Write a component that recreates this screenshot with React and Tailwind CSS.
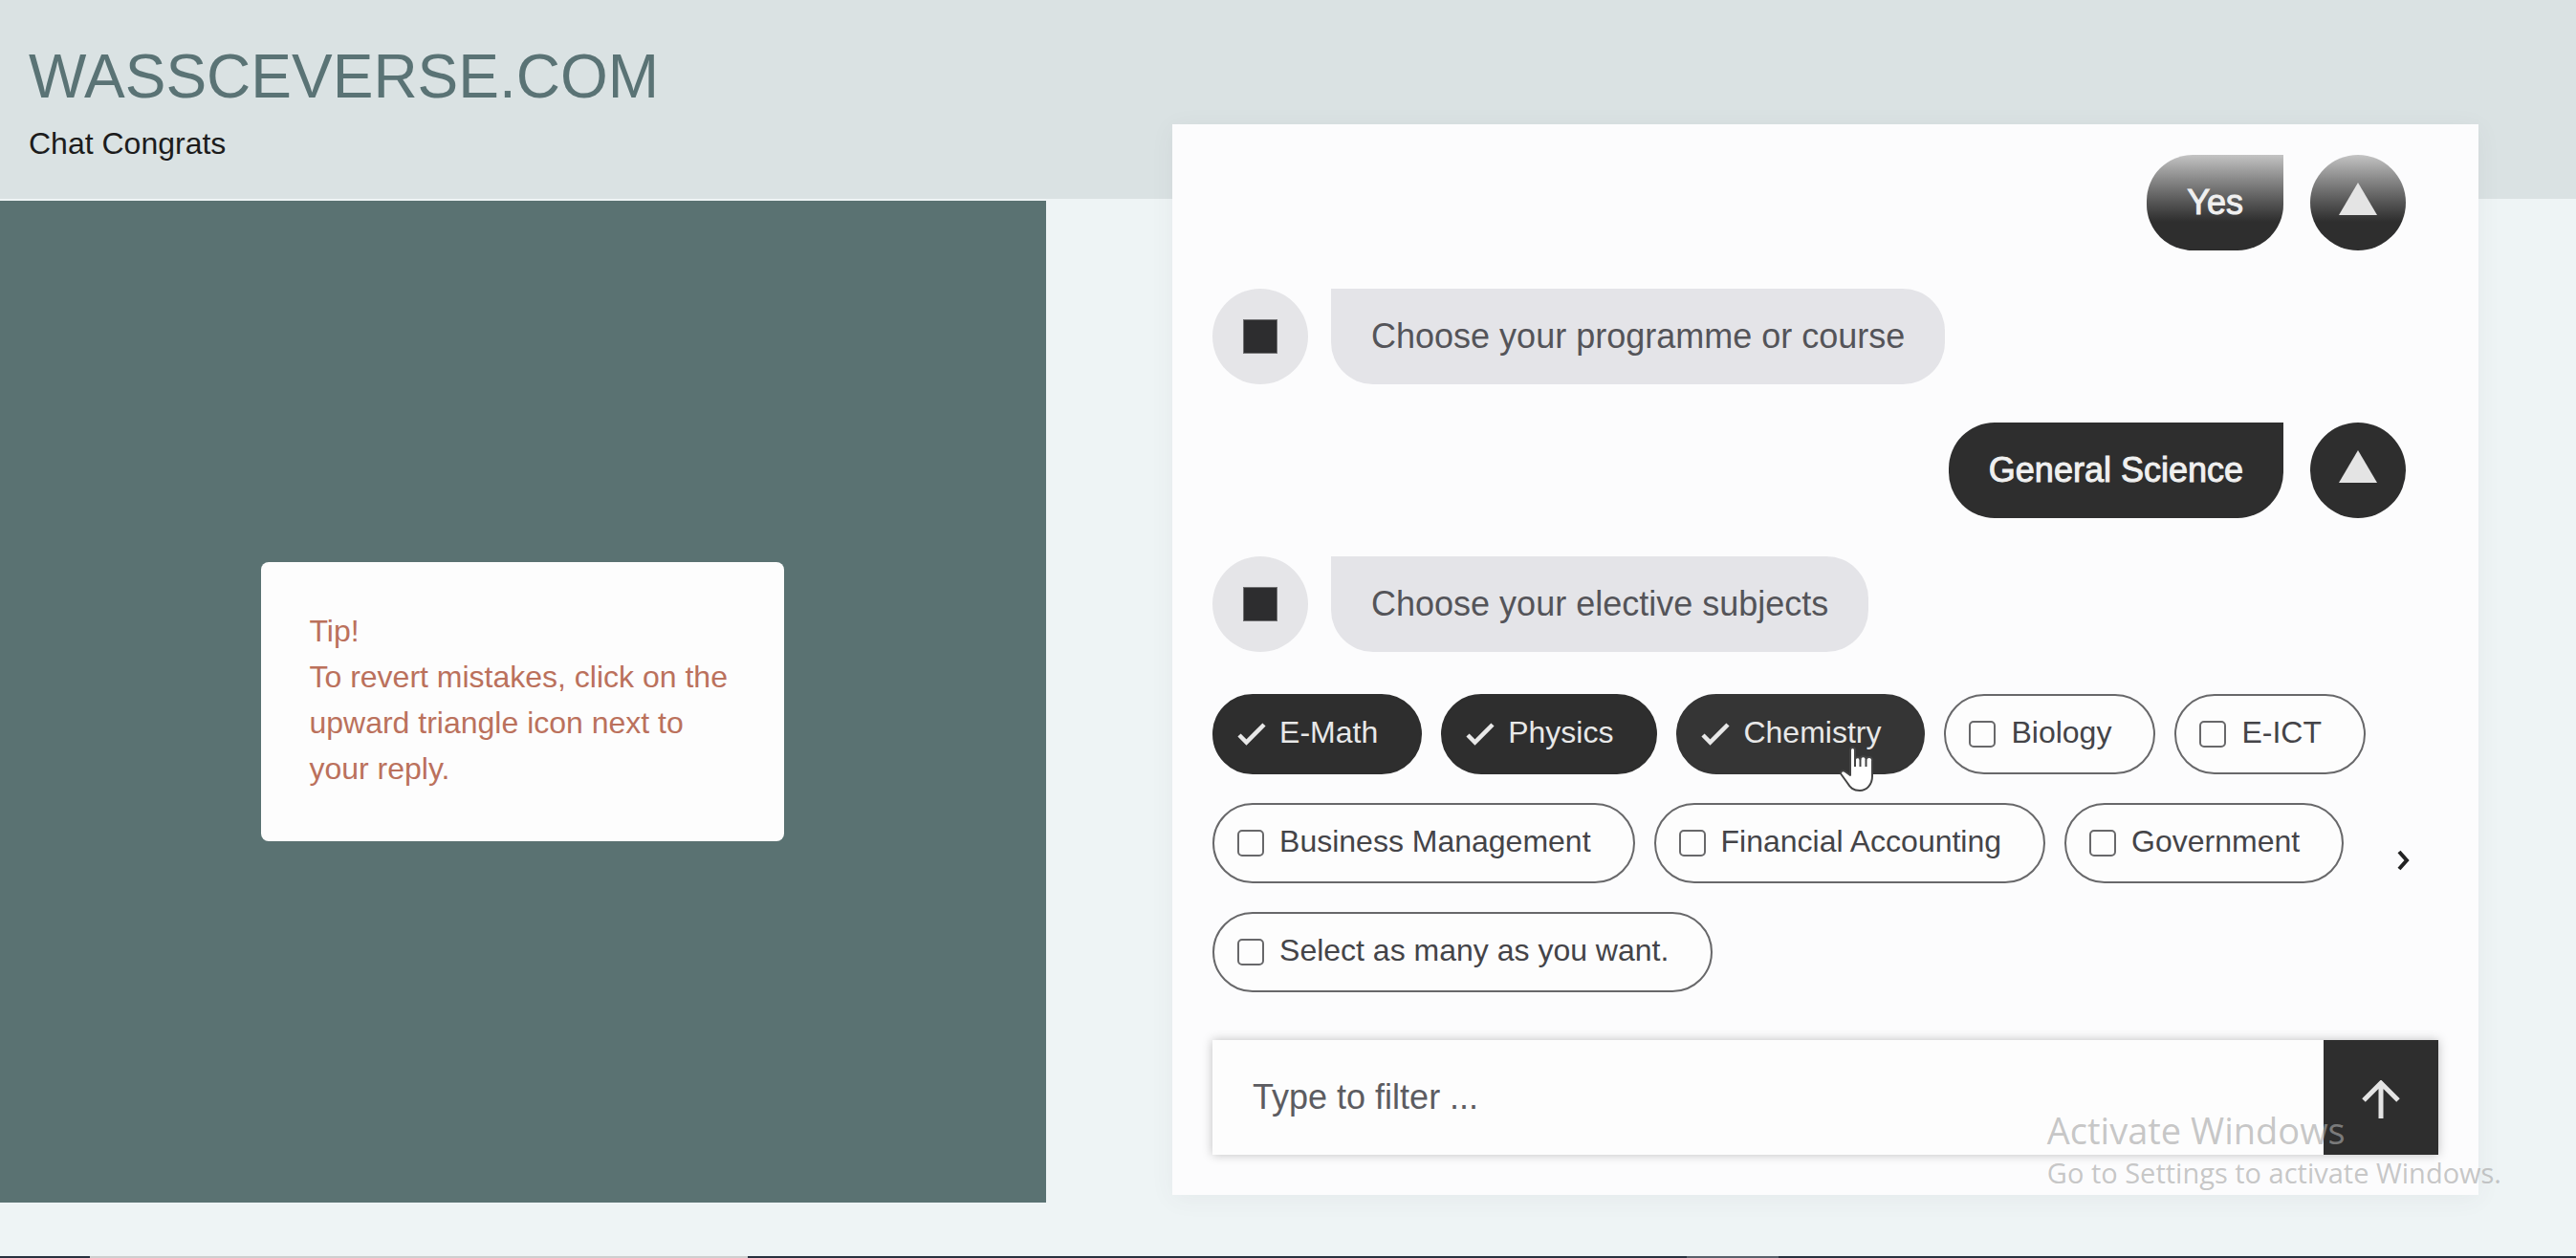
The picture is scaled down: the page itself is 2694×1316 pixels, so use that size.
import { useState } from "react";

const SUBJECTS = [
  { name: "E-Math", checked: true },
  { name: "Physics", checked: true },
  { name: "Chemistry", checked: true, hovered: true },
  { name: "Biology" },
  { name: "E-ICT" },
  { name: "Business Management" },
  { name: "Financial Accounting" },
  { name: "Government" },
  { name: "Select as many as you want." },
];

function BotMessage({ children }) {
  return (
    <div className="flex items-center gap-6">
      <div className="flex size-[100px] shrink-0 items-center justify-center rounded-full bg-[#e5e5e8]">
        <span className="size-9 border border-[#707072] bg-[#2d2d2f]" />
      </div>
      <p className="flex h-[100px] items-center rounded-[44px] rounded-tl-none bg-[#e4e4e8] px-[42px] text-[36px] text-[#545459]">
        {children}
      </p>
    </div>
  );
}

function UserMessage({ children, faded }) {
  const fill = faded
    ? "bg-linear-to-b from-[#c4c4c4] to-[#2e2e2e] to-70%"
    : "bg-[#2e2e2e]";
  return (
    <div className="flex items-center justify-end gap-7 pr-[34px]">
      <p
        className={`flex h-[100px] items-center rounded-[48px] rounded-tr-none px-[42px] text-[36px] text-[#f0f0f0] [-webkit-text-stroke:1px_#f0f0f0] ${fill}`}
      >
        {children}
      </p>
      <button
        type="button"
        aria-label="Revert this reply"
        className={`flex size-[100px] shrink-0 items-center justify-center rounded-full pb-2 ${fill}`}
      >
        <svg viewBox="0 0 40 34" className="h-[34px] w-10" aria-hidden="true">
          <path d="M20 0L40 34H0Z" fill="#e4e4e4" />
        </svg>
      </button>
    </div>
  );
}

function HandPointer() {
  return (
    <svg
      viewBox="0 0 36 48"
      className="pointer-events-none absolute top-[53px] left-[169px] z-10 h-12 w-9"
      aria-hidden="true"
    >
      <path
        d="M11 3.500a2.500 2.500 0 0 1 5 0V13a3 3 0 0 1 5.500 0a3 3 0 0 1 6 .500a3 3 0 0 1 6.500 1.500V31c0 9-6 15-13 15S11 43 8 38L1.500 29c-1.500-3 1.500-4.500 4-3l5.500 4Z"
        fill="#fff"
        stroke="#444"
        strokeWidth="2"
        strokeLinejoin="round"
      />
      <path d="M16 11v10M21.500 13v8M27.500 14v7" stroke="#444" strokeWidth="2" />
    </svg>
  );
}

function SubjectChip({ subject }) {
  const [checked, setChecked] = useState(Boolean(subject.checked));
  return (
    <label
      className={`relative flex h-[84px] cursor-pointer items-center gap-4 rounded-full border-2 pr-11 pl-6 text-[32px] ${
        checked
          ? subject.hovered
            ? "border-[#353535] bg-[#353535] text-[#e8e8e8]"
            : "border-[#2e2e2e] bg-[#2e2e2e] text-[#e8e8e8]"
          : "border-[#68686a] bg-[#fdfdfd] text-[#444448]"
      }`}
    >
      <span className="grid size-7 place-items-center">
        <input
          type="checkbox"
          checked={checked}
          onChange={() => setChecked(!checked)}
          className="col-start-1 row-start-1 size-7 appearance-none rounded-[5px] border-2 border-[#68686a] checked:border-transparent"
        />
        {checked && (
          <svg
            viewBox="0 0 30 24"
            className="pointer-events-none col-start-1 row-start-1 h-6 w-[30px]"
            fill="none"
            aria-hidden="true"
          >
            <path d="M2 13l7.500 7.500L28 2" stroke="#e8e8e8" strokeWidth="4.500" />
          </svg>
        )}
      </span>
      <span className="pb-1 whitespace-nowrap">{subject.name}</span>
      {subject.hovered && <HandPointer />}
    </label>
  );
}

function ChatPanel() {
  return (
    <section
      aria-label="Chat"
      className="-mt-[78px] w-[52.7%] bg-[#fcfcfd] px-[42px] pt-8 pb-[42px] shadow-[0_4px_24px_rgba(80,60,90,0.06)]"
    >
      <div className="flex flex-col gap-10">
        <UserMessage faded>Yes</UserMessage>
        <BotMessage>Choose your programme or course</BotMessage>
        <UserMessage>General Science</UserMessage>
        <BotMessage>Choose your elective subjects</BotMessage>
      </div>

      <div className="mt-11 flex items-center">
        <div
          role="group"
          aria-label="Elective subjects"
          className="flex flex-1 flex-wrap gap-x-5 gap-y-[30px]"
        >
          {SUBJECTS.map((subject) => (
            <SubjectChip key={subject.name} subject={subject} />
          ))}
        </div>
        <button
          type="button"
          aria-label="More subjects"
          className="flex w-[72px] justify-center pt-9"
        >
          <svg viewBox="0 0 14 22" className="h-[22px] w-3.5" fill="none" aria-hidden="true">
            <path d="M2 2l8 9-8 9" stroke="#222" strokeWidth="4" />
          </svg>
        </button>
      </div>

      <form
        className="mt-[50px] flex h-[120px] shadow-[0_0_10px_rgba(0,0,0,0.25)]"
        onSubmit={(event) => event.preventDefault()}
      >
        <input
          type="text"
          aria-label="Type to filter"
          placeholder="Type to filter ..."
          className="min-w-0 flex-1 bg-[#fdfdfd] px-[42px] text-[36px] text-[#333] outline-none placeholder:text-[#5c5c61]"
        />
        <button
          type="submit"
          aria-label="Send"
          className="flex w-[120px] items-center justify-center bg-[#2e2e2e] pt-1"
        >
          <svg viewBox="0 0 40 40" className="size-10" fill="none" aria-hidden="true">
            <path d="M20 40V3M2 21L20 3L38 21" stroke="#e4e4e4" strokeWidth="5" />
          </svg>
        </button>
      </form>
    </section>
  );
}

export default function App() {
  return (
    <div className="relative flex min-h-screen flex-col bg-[#eef4f5] font-['Liberation_Sans',Arial,sans-serif] text-[#1c1c1c]">
      <header className="h-[208px] bg-[#dae2e3] px-[30px] pt-11">
        <h1 className="text-[64px] leading-[72px] text-[#5a7375]">WASSCEVERSE.COM</h1>
        <p className="mt-2.5 text-[32px] leading-[48px]">Chat Congrats</p>
      </header>

      <main className="flex flex-1 items-start justify-between pr-[102px]">
        <aside className="mt-0.5 flex h-[1048px] w-[42.2%] items-center justify-center bg-[#5a7272]">
          <div className="w-1/2 rounded-lg bg-[#fdfdfd] px-[50px] pt-12 pb-[52px] text-[32px] leading-[48px] text-[#bb715c]">
            <p>Tip!</p>
            <p>To revert mistakes, click on the upward triangle icon next to your reply.</p>
          </div>
        </aside>
        <ChatPanel />
      </main>

      <footer className="flex h-0.5 bg-[#28323f]">
        <span className="ml-[94px] w-[688px] bg-[#cdcfcf]" />
        <span className="ml-[982px] w-24 bg-[#59616b]" />
      </footer>

      <div className="pointer-events-none absolute right-[78px] bottom-[68px] font-['Open_Sans',sans-serif] text-[#a8a8a8]/65">
        <p className="text-[38px] leading-[48px]">Activate Windows</p>
        <p className="text-[29px] leading-[42px]">Go to Settings to activate Windows.</p>
      </div>
    </div>
  );
}
